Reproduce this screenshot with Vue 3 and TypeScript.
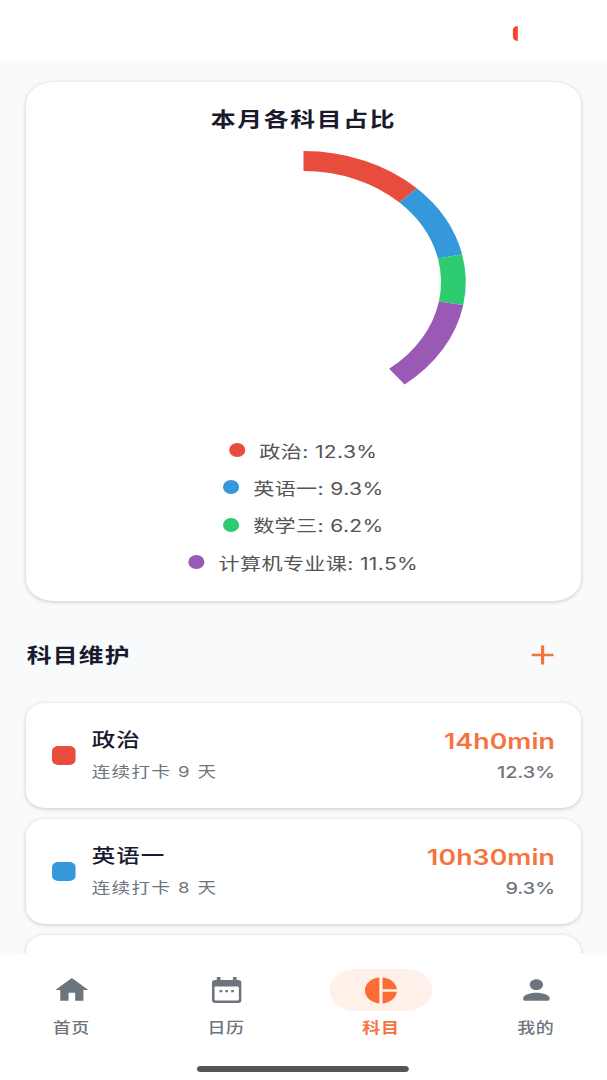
<script setup lang="ts">
interface Subject {
  name: string
  color: string
  percent: number
  time: string
  streak: number
}

const subjects: Subject[] = [
  { name: '政治', color: '#e74c3c', percent: 12.3, time: '14h0min', streak: 9 },
  { name: '英语一', color: '#3498db', percent: 9.3, time: '10h30min', streak: 8 },
]
const legend = [
  { name: '政治', color: '#e74c3c', percent: 12.3 },
  { name: '英语一', color: '#3498db', percent: 9.3 },
  { name: '数学三', color: '#2ecc71', percent: 6.2 },
  { name: '计算机专业课', color: '#9b59b6', percent: 11.5 },
]

const cx = 150
const cy = 149
const r = 121

function point(pct: number): string {
  const a = (pct / 100) * Math.PI * 2
  return `${(cx + r * Math.sin(a)).toFixed(2)} ${(cy - r * Math.cos(a)).toFixed(2)}`
}

let acc = 0
const arcs = legend.map((s) => {
  const from = acc
  acc += s.percent
  return { color: s.color, d: `M${point(from)} A${r} ${r} 0 0 1 ${point(acc)}` }
})

const tabs = [
  { label: '首页', key: 'home', active: false },
  { label: '日历', key: 'calendar', active: false },
  { label: '科目', key: 'pie', active: true },
  { label: '我的', key: 'person', active: false },
]
</script>

<template>
  <div class="screen">
    <header class="topbar"><span class="status-mark"></span></header>

    <main class="content">
      <section class="chart-card">
        <h2 class="chart-title">本月各科目占比</h2>
        <svg class="donut" width="300" height="298" viewBox="0 0 300 298">
          <path v-for="a in arcs" :key="a.color" :d="a.d" :stroke="a.color" stroke-width="20" fill="none" />
        </svg>
        <ul class="legend">
          <li v-for="s in legend" :key="s.name" class="legend-row">
            <span class="dot" :style="{ background: s.color }"></span>
            <span>{{ s.name }}: {{ s.percent }}%</span>
          </li>
        </ul>
      </section>

      <div class="section-head">
        <h3 class="section-title">科目维护</h3>
        <svg class="plus" width="18" height="20" viewBox="0 0 18 20">
          <path d="M9 0.5V19.5M0 10H18" stroke="#f4733f" stroke-width="2.6" fill="none" />
        </svg>
      </div>

      <div class="rows">
        <article v-for="s in subjects" :key="s.name" class="row">
          <span class="swatch" :style="{ background: s.color }"></span>
          <div class="row-info">
            <div class="row-name">{{ s.name }}</div>
            <div class="row-sub">连续打卡 {{ s.streak }} 天</div>
          </div>
          <div class="row-stat">
            <div class="row-time">{{ s.time }}</div>
            <div class="row-pct">{{ s.percent }}%</div>
          </div>
        </article>
        <article class="row"></article>
      </div>
    </main>

    <nav class="tabbar">
      <div v-for="t in tabs" :key="t.key" class="tab" :class="{ active: t.active }">
        <div class="tab-icon">
          <svg v-if="t.key === 'home'" width="32" height="32" viewBox="0 0 24 24">
            <path d="M10 20v-6h4v6h5v-8h3L12 3 2 12h3v8z" />
          </svg>
          <svg v-else-if="t.key === 'calendar'" width="24" height="26" viewBox="0 0 24 26">
            <path fill-rule="evenodd" d="M4 0h3v3h10V0h3v3h1a3 3 0 0 1 3 3v17a3 3 0 0 1-3 3H3a3 3 0 0 1-3-3V6a3 3 0 0 1 3-3h1zM3 9.500a.8.8 0 0 0-.8.8v12a1.200 1.200 0 0 0 1.200 1.200h17.200a1.200 1.200 0 0 0 1.200-1.200v-12a.8.8 0 0 0-.8-.8z" />
            <path d="M6.200 13h2.200v2.200H6.200zM10.900 13h2.200v2.200h-2.200zM15.600 13h2.200v2.200h-2.200z" />
          </svg>
          <svg v-else-if="t.key === 'pie'" width="31" height="31" viewBox="0 0 24 24">
            <path d="M11 2v20c-5.070-.5-9-4.790-9-10s3.930-9.500 9-10zm2.030 0v8.990H22c-.47-4.740-4.240-8.520-8.970-8.990zm0 11.010V22c4.740-.47 8.500-4.250 8.970-8.990h-8.970z" />
          </svg>
          <svg v-else width="32" height="32" viewBox="0 0 24 24">
            <path d="M12 12c2.210 0 4-1.790 4-4s-1.790-4-4-4-4 1.790-4 4 1.790 4 4 4zm0 2c-2.670 0-8 1.340-8 4v1c0 .55.45 1 1 1h14c.55 0 1-.45 1-1v-1c0-2.660-5.330-4-8-4z" />
          </svg>
        </div>
        <span class="tab-label">{{ t.label }}</span>
      </div>
      <span class="home-indicator"></span>
    </nav>
  </div>
</template>

<style>
html, body { margin: 0; overflow: hidden; background: #f9fafb; }
</style>

<style scoped>
.screen {
  width: 490px;
  height: 1080px;
  transform: scaleX(1.2388);
  transform-origin: 0 0;
  display: flex;
  flex-direction: column;
  overflow: hidden;
  background: #f9fafb;
  color: #1a1a2e;
  font-family: Inter, "Noto Sans CJK SC", sans-serif;
}
.topbar {
  flex: none;
  height: 61px;
  background: #fff;
  position: relative;
}
.status-mark {
  position: absolute;
  left: 413.500px;
  top: 26px;
  width: 4.500px;
  height: 15px;
  background: #f44336;
  border-radius: 4px 0 0 4px;
}
.content {
  flex: 1;
  min-height: 0;
  overflow: hidden;
  padding: 21px 21px 0;
}
.chart-card {
  background: #fff;
  border-radius: 22px;
  box-shadow: 0 1px 4px rgba(0, 0, 0, 0.2);
  height: 519px;
  box-sizing: border-box;
  padding-top: 24px;
}
.chart-title {
  margin: 0 0 -1px;
  text-align: center;
  font-size: 20px;
  line-height: 28px;
  font-weight: 700;
  letter-spacing: 1.4px;
}
.donut {
  display: block;
  margin: 0 auto;
}
.legend {
  list-style: none;
  margin: 7px 0 0;
  padding: 0;
  display: flex;
  flex-direction: column;
  gap: 13.400px;
}
.legend-row {
  height: 24px;
  display: flex;
  justify-content: center;
  align-items: center;
  gap: 11px;
  font-size: 17px;
  letter-spacing: 0.3px;
  color: #555;
}
.dot {
  width: 13px;
  height: 14px;
  border-radius: 50%;
}
.section-head {
  margin-top: 40px;
  height: 28px;
  display: flex;
  justify-content: space-between;
  align-items: center;
}
.section-title {
  margin: 2px 0 0 0.5px;
  font-size: 20px;
  font-weight: 700;
  line-height: 28px;
  letter-spacing: 1px;
}
.plus { margin-right: 22px; }
.rows {
  margin-top: 34px;
  display: flex;
  flex-direction: column;
  gap: 11px;
}
.row {
  flex: none;
  height: 105px;
  box-sizing: border-box;
  padding: 0 21px;
  background: #fff;
  border-radius: 16px;
  box-shadow: 0 1px 4px rgba(0, 0, 0, 0.2);
  display: flex;
  align-items: center;
  gap: 14px;
}
.swatch {
  flex: none;
  width: 18.500px;
  height: 19px;
  border-radius: 5px;
}
.row-info { flex: 1; margin-left: -0.5px; }
.row-name {
  font-size: 19px;
  line-height: 24px;
  font-weight: 500;
  letter-spacing: 0.8px;
  margin-bottom: 8px;
}
.row-sub {
  font-size: 15px;
  line-height: 22px;
  color: #6c757d;
  letter-spacing: 1.100px;
}
.row-pct {
  font-size: 16px;
  line-height: 22px;
  color: #6c757d;
  font-weight: 500;
}
.row-stat { text-align: right; }
.row-time {
  font-size: 21.500px;
  line-height: 24px;
  font-weight: 600;
  letter-spacing: 0.1px;
  color: #f4733f;
  margin-bottom: 8px;
}
.tabbar {
  flex: none;
  height: 127px;
  box-sizing: border-box;
  padding: 16px 16px 0;
  background: #fff;
  position: relative;
  display: flex;
  justify-content: space-between;
  align-items: flex-start;
}
.tab {
  width: 83px;
  display: flex;
  flex-direction: column;
  align-items: center;
  color: #6c757d;
  fill: #6c757d;
}
.tab-icon {
  width: 83px;
  height: 42px;
  border-radius: 21px;
  display: flex;
  align-items: center;
  justify-content: center;
}
.tab.active { color: #f4733f; fill: #ff6b35; }
.tab.active .tab-icon { background: #fff0e9; }
.tab-label {
  margin-top: 6px;
  font-size: 14.500px;
  line-height: 22px;
  font-weight: 500;
  letter-spacing: 0.5px;
}
.tab.active .tab-label { font-weight: 700; }
.home-indicator {
  position: absolute;
  left: 159px;
  bottom: 8px;
  width: 171px;
  height: 6px;
  border-radius: 3px;
  background: #555;
}
</style>
